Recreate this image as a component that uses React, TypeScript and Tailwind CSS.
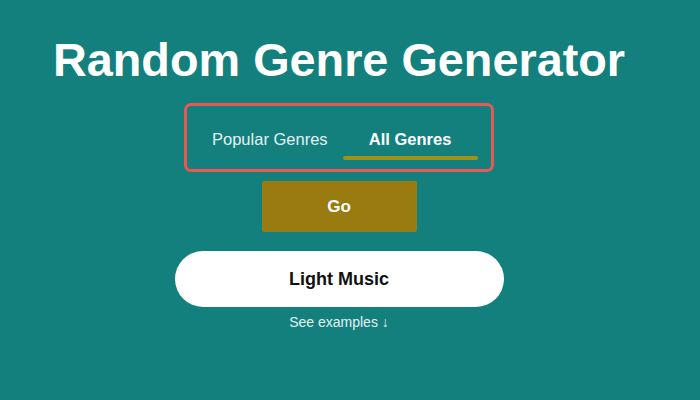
import { useState } from 'react';

const genres = ['Light Music'];

export default function App() {
  const [tab, setTab] = useState<'popular' | 'all'>('all');

  return (
    <div className="min-h-[400px] w-[700px] bg-[#13807d] font-['Liberation_Sans',Arial,sans-serif] text-white">
      <div className="flex w-[678px] flex-col items-center pt-[31px]">
        <h1 className="text-[46.8px] font-bold leading-[58px]">Random Genre Generator</h1>

        {/* genre list switcher */}
        <div className="mt-[14px] flex h-[69px] w-[310px] rounded-[7px] border-[3px] border-[#e35b57] pl-[25px] pr-[13px] pt-[21px]">
          <button
            onClick={() => setTab('popular')}
            className="flex flex-col items-start pr-[15px]"
          >
            <span className={`text-[16.5px] leading-[24px] ${tab === 'popular' ? 'font-bold text-white' : 'text-[#e6f2f1]'}`}>
              Popular Genres
            </span>
          </button>
          <button
            onClick={() => setTab('all')}
            className="flex w-[135px] flex-col items-center"
          >
            <span className={`text-[16.5px] leading-[24px] ${tab === 'all' ? 'font-bold text-white' : 'text-[#e6f2f1]'}`}>
              All Genres
            </span>
            {tab === 'all' && (
              <span className="mt-[5px] h-[4px] w-full rounded-full bg-[#a39114]" />
            )}
          </button>
        </div>

        <button className="mt-[9px] h-[51px] w-[155px] rounded-[2px] bg-[#9a7b10] text-[17px] font-bold text-white">
          Go
        </button>

        <div className="mt-[19px] flex h-[56px] w-[329px] items-center justify-center rounded-full bg-white text-[18px] font-bold text-[#111]">
          {genres[0]}
        </div>

        <p className="mt-[5px] text-[14px] leading-[20px] text-[#e3f1ef]">See examples ↓</p>
      </div>
    </div>
  );
}
